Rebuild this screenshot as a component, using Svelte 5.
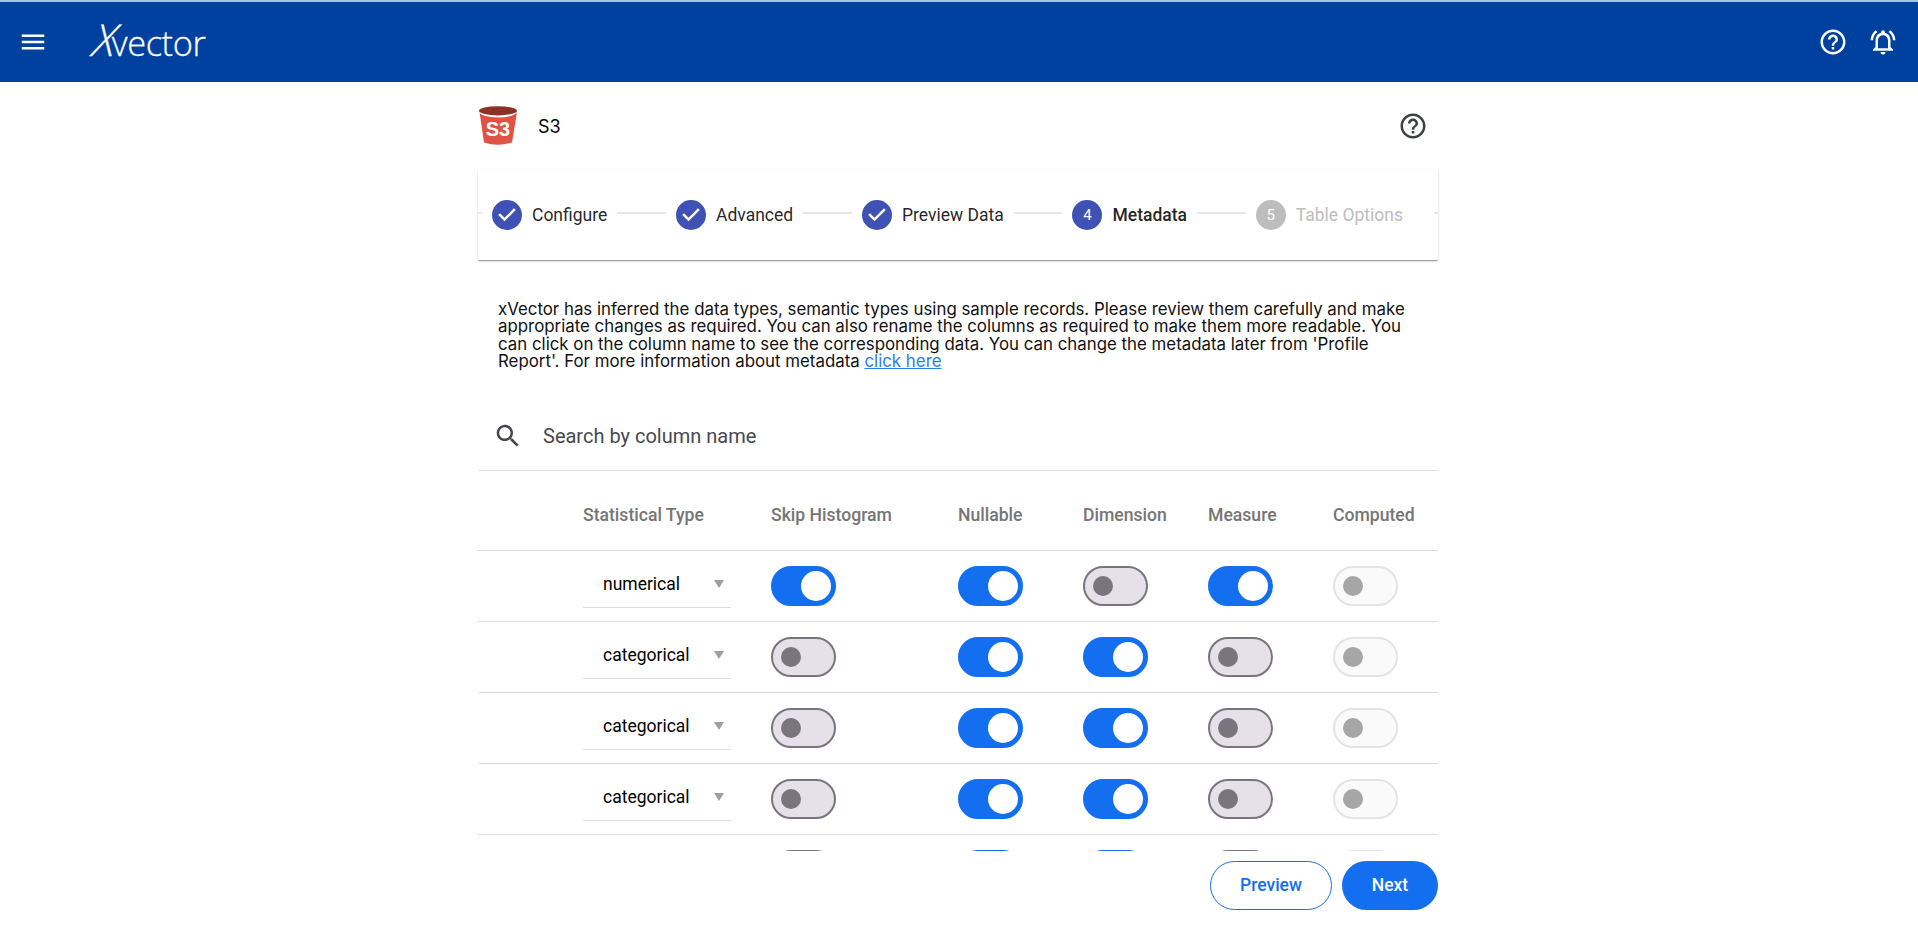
<script>
  const steps = [
    { label: 'Configure', state: 'done' },
    { label: 'Advanced', state: 'done' },
    { label: 'Preview Data', state: 'done' },
    { label: 'Metadata', state: 'active', num: 4 },
    { label: 'Table Options', state: 'todo', num: 5 }
  ];

  const columns = ['Skip Histogram', 'Nullable', 'Dimension', 'Measure', 'Computed'];

  // skip, nullable, dimension, measure, computed
  let rows = $state([
    { type: 'numerical', flags: [true, true, false, true, false] },
    { type: 'categorical', flags: [false, true, true, false, false] },
    { type: 'categorical', flags: [false, true, true, false, false] },
    { type: 'categorical', flags: [false, true, true, false, false] },
    { type: 'categorical', flags: [false, true, true, false, false] }
  ]);

  function toggle(row, i) {
    if (i === 4) return; // computed stays disabled
    row.flags[i] = !row.flags[i];
  }
</script>

<header class="topbar">
  <button class="icon-btn menu" type="button" aria-label="Menu">
    <svg viewBox="0 0 24 24" width="30" height="30"><path d="M3 18h18v-2H3v2zm0-5h18v-2H3v2zm0-7v2h18V6H3z" /></svg>
  </button>
  <div class="logo"><span class="logo-x">X</span>vector</div>
  <div class="topbar-right">
    <svg viewBox="0 0 24 24" width="30" height="30"><path d="M11 18h2v-2h-2v2zm1-16C6.48 2 2 6.48 2 12s4.48 10 10 10 10-4.48 10-10S17.52 2 12 2zm0 18c-4.41 0-8-3.59-8-8s3.59-8 8-8 8 3.59 8 8-3.59 8-8 8zm0-14c-2.21 0-4 1.79-4 4h2c0-1.1.9-2 2-2s2 .9 2 2c0 2-3 1.75-3 5h2c0-2.25 3-2.5 3-5 0-2.21-1.79-4-4-4z" /></svg>
    <svg viewBox="0 0 24 24" width="30" height="30"><path d="M7.58 4.08L6.15 2.65C3.75 4.48 2.17 7.3 2.03 10.5h2c.15-2.65 1.51-4.97 3.55-6.42zm12.39 6.42h2c-.15-3.2-1.73-6.02-4.12-7.85l-1.42 1.43c2.02 1.45 3.39 3.77 3.54 6.42zM18 11c0-3.07-1.64-5.64-4.5-6.32V4c0-.83-.67-1.5-1.5-1.5s-1.5.67-1.5 1.5v.68C7.63 5.36 6 7.92 6 11v5l-2 2v1h16v-1l-2-2v-5zm-2 6H8v-6c0-2.48 1.51-4.5 4-4.5s4 2.02 4 4.5v6zm-4 5c.14 0 .27-.01.4-.04.65-.14 1.18-.58 1.44-1.18.1-.24.15-.5.15-.78h-4c.01 1.1.9 2 2.01 2z" /></svg>
  </div>
</header>

<main class="page">
  <div class="title-row">
    <svg class="s3" viewBox="0 0 38 40" width="38" height="40">
      <path d="M0.5 6 L38 6 L33 36.5 Q19 41 5 36.5 Z" fill="#e05243" />
      <ellipse cx="19" cy="5.5" rx="19" ry="6" fill="#fff" />
      <ellipse cx="19" cy="4.8" rx="19" ry="4.6" fill="#8c3123" />
      <text x="19" y="29.5" text-anchor="middle" class="s3-text">S3</text>
    </svg>
    <span class="title">S3</span>
    <svg class="help" viewBox="0 0 24 24" width="30" height="30"><path d="M11 18h2v-2h-2v2zm1-16C6.48 2 2 6.48 2 12s4.48 10 10 10 10-4.48 10-10S17.52 2 12 2zm0 18c-4.41 0-8-3.59-8-8s3.59-8 8-8 8 3.59 8 8-3.59 8-8 8zm0-14c-2.21 0-4 1.79-4 4h2c0-1.1.9-2 2-2s2 .9 2 2c0 2-3 1.75-3 5h2c0-2.25 3-2.5 3-5 0-2.21-1.79-4-4-4z" /></svg>
  </div>

  <div class="stepper">
    <span class="connector stub"></span>
    {#each steps as step, i}
      <div class="step {step.state}">
        {#if step.state === 'done'}
          <svg class="step-icon" viewBox="0 0 24 24" width="30" height="30"><path d="M12 0a12 12 0 1 0 0 24 12 12 0 0 0 0-24zm-2 17l-5-5 1.4-1.4 3.6 3.6 7.6-7.6L19 8l-9 9z" /></svg>
        {:else}
          <span class="step-num">{step.num}</span>
        {/if}
        <span class="step-label">{step.label}</span>
      </div>
      <span class="connector" class:stub={i === steps.length - 1}></span>
    {/each}
  </div>

  <p class="intro">
    xVector has inferred the data types, semantic types using sample records. Please review them carefully and make
    appropriate changes as required. You can also rename the columns as required to make them more readable. You
    can click on the column name to see the corresponding data. You can change the metadata later from 'Profile
    Report'. For more information about metadata <a href="#metadata">click here</a>
  </p>

  <div class="search">
    <svg viewBox="0 0 24 24" width="30" height="30"><path d="M15.5 14h-.79l-.28-.27C15.41 12.59 16 11.11 16 9.5 16 5.91 13.09 3 9.5 3S3 5.91 3 9.5 5.91 16 9.5 16c1.61 0 3.09-.59 4.23-1.57l.27.28v.79l5 4.99L20.49 19l-4.99-5zm-6 0C7.01 14 5 11.99 5 9.5S7.01 5 9.5 5 14 7.01 14 9.5 11.99 14 9.5 14z" /></svg>
    <input type="text" placeholder="Search by column name" />
  </div>

  <div class="table">
    <div class="row head">
      <span></span>
      <span>Statistical Type</span>
      {#each columns as col}
        <span>{col}</span>
      {/each}
    </div>
    {#each rows as row}
      <div class="row">
        <span></span>
        <div class="type-select">
          <span>{row.type}</span>
          <i class="caret"></i>
        </div>
        {#each row.flags as on, i}
          <div>
            <button
              type="button"
              role="switch"
              aria-checked={on}
              aria-label={columns[i]}
              class="switch"
              class:on
              class:disabled={i === 4}
              onclick={() => toggle(row, i)}
            ><span class="knob"></span></button>
          </div>
        {/each}
      </div>
    {/each}
  </div>

  <div class="actions">
    <button type="button" class="btn outline">Preview</button>
    <button type="button" class="btn solid">Next</button>
  </div>
</main>

<style>
  :global(body) {
    margin: 0;
    background: #fff;
    font-family: Roboto, "Liberation Sans", sans-serif;
    overflow: hidden;
  }

  .topbar {
    display: flex;
    align-items: center;
    box-sizing: border-box;
    height: 82px;
    padding: 0 7px 0 18px;
    background: #00419f;
    border-top: 2px solid #9fc8da;
    color: #fff;
  }

  .topbar svg {
    display: block;
    fill: #fff;
  }

  .icon-btn {
    padding: 0;
    border: 0;
    background: none;
    cursor: pointer;
  }

  .logo {
    margin: -2px 0 0 46px;
    font-family: "Open Sans", sans-serif;
    font-weight: 300;
    font-size: 34.4px;
    line-height: 1;
    letter-spacing: -0.4px;
    -webkit-text-stroke: 0.3px #fff;
  }

  .logo-x {
    display: inline-block;
    font-size: 44px;
    font-style: italic;
    line-height: 35px;
    margin-right: -4px;
    transform: skewX(-8deg);
  }

  .topbar-right {
    display: flex;
    align-items: center;
    gap: 20px;
    margin-left: auto;
    margin-right: 13px;
  }

  .page {
    width: 960px;
    margin-left: calc(50% - 481px);
    color: #000;
  }

  .title-row {
    display: flex;
    align-items: center;
    height: 88px;
    box-sizing: border-box;
    padding: 0 10px 0 1px;
  }

  .s3-text {
    font-family: "Liberation Sans", sans-serif;
    font-weight: 700;
    font-size: 20px;
    fill: #fff;
  }

  .title {
    margin-left: 21px;
    font-family: Inter, sans-serif;
    font-size: 18px;
  }

  .help {
    margin-left: auto;
    fill: #3c4043;
  }

  .stepper {
    display: flex;
    align-items: center;
    height: 90px;
    background: #fff;
    box-shadow: 0 2px 1px -1px rgba(0, 0, 0, 0.2), 0 1px 1px 0 rgba(0, 0, 0, 0.14), 0 1px 3px 0 rgba(0, 0, 0, 0.12);
  }

  .connector {
    flex: 1 1 0;
    height: 2px;
    margin: -4px 10px 0;
    background: #e6e6e6;
  }

  .connector.stub {
    flex: 0 0 4px;
    margin-left: 0;
    margin-right: 10px;
  }

  .connector.stub:last-child {
    margin: -4px 0 0 31px;
  }

  .step {
    display: flex;
    align-items: center;
    gap: 10px;
    font-size: 17.5px;
    color: rgba(0, 0, 0, 0.87);
    white-space: nowrap;
  }

  .step-icon {
    fill: #3f51b5;
    display: block;
  }

  .step-num {
    display: flex;
    align-items: center;
    justify-content: center;
    width: 30px;
    height: 30px;
    border-radius: 50%;
    background: #3f51b5;
    color: #fff;
    font-size: 15px;
  }

  .step.active .step-label {
    font-weight: 500;
  }

  .step.todo .step-num {
    background: #bdbdbd;
  }

  .step.todo .step-label {
    color: #bdbdbd;
  }

  .intro {
    margin: 0;
    padding: 41px 25px 0 20px;
    font-family: Inter, sans-serif;
    font-size: 16.85px;
    line-height: 17.4px;
    color: #111;
  }

  .intro a {
    color: #2b7de9;
  }

  .search {
    display: flex;
    align-items: center;
    gap: 20px;
    box-sizing: border-box;
    height: 100px;
    padding: 32px 15px 0;
    border-bottom: 1px solid #e0e0e0;
  }

  .search svg {
    flex: none;
    fill: #44474f;
  }

  .search input {
    flex: 1;
    border: 0;
    outline: 0;
    padding: 0;
    font: 20px Roboto, sans-serif;
  }

  .search input::placeholder {
    color: #46484f;
    opacity: 1;
  }

  .table {
    height: 380px;
    overflow: hidden;
  }

  .row {
    display: grid;
    grid-template-columns: 105px 188px 187px 125px 125px 125px 105px;
    box-sizing: border-box;
    height: 71px;
    padding-top: 15px;
    border-bottom: 1px solid #dcdcdc;
  }

  .row.head {
    height: 80px;
    padding-top: 34px;
    font-size: 17.6px;
    font-weight: 500;
    color: #757575;
    white-space: nowrap;
  }

  .type-select {
    display: flex;
    align-items: center;
    justify-content: space-between;
    box-sizing: border-box;
    width: 148px;
    height: 50px;
    margin-top: -8px;
    padding: 4px 7px 0 20px;
    border-bottom: 1px solid #ddd;
    font-size: 17.5px;
    color: #000;
  }

  .caret {
    width: 0;
    height: 0;
    border-left: 5px solid transparent;
    border-right: 5px solid transparent;
    border-top: 8px solid #9e9e9e;
  }

  .switch {
    display: block;
    position: relative;
    box-sizing: border-box;
    width: 65px;
    height: 40px;
    padding: 0;
    border: 2px solid #79747e;
    border-radius: 20px;
    background: #e6e0e9;
    cursor: pointer;
  }

  .knob {
    position: absolute;
    top: 8px;
    left: 8px;
    width: 20px;
    height: 20px;
    border-radius: 50%;
    background: #79747e;
  }

  .switch.on {
    border-color: #136ff0;
    background: #136ff0;
  }

  .switch.on .knob {
    top: 3px;
    left: 28px;
    width: 30px;
    height: 30px;
    background: #fff;
  }

  .switch.disabled {
    border-color: #e4e4e4;
    background: #fafafa;
    cursor: default;
  }

  .switch.disabled .knob {
    background: #a6a6a6;
  }

  .actions {
    display: flex;
    justify-content: flex-end;
    gap: 10px;
    margin-top: 10px;
  }

  .btn {
    height: 49px;
    border-radius: 25px;
    font-family: Roboto, sans-serif;
    font-size: 17.5px;
    font-weight: 500;
    cursor: pointer;
  }

  .outline {
    width: 122px;
    background: #fff;
    border: 1px solid #136ff0;
    color: #136ff0;
  }

  .solid {
    width: 96px;
    background: #136ff0;
    border: 0;
    color: #fff;
  }
</style>
